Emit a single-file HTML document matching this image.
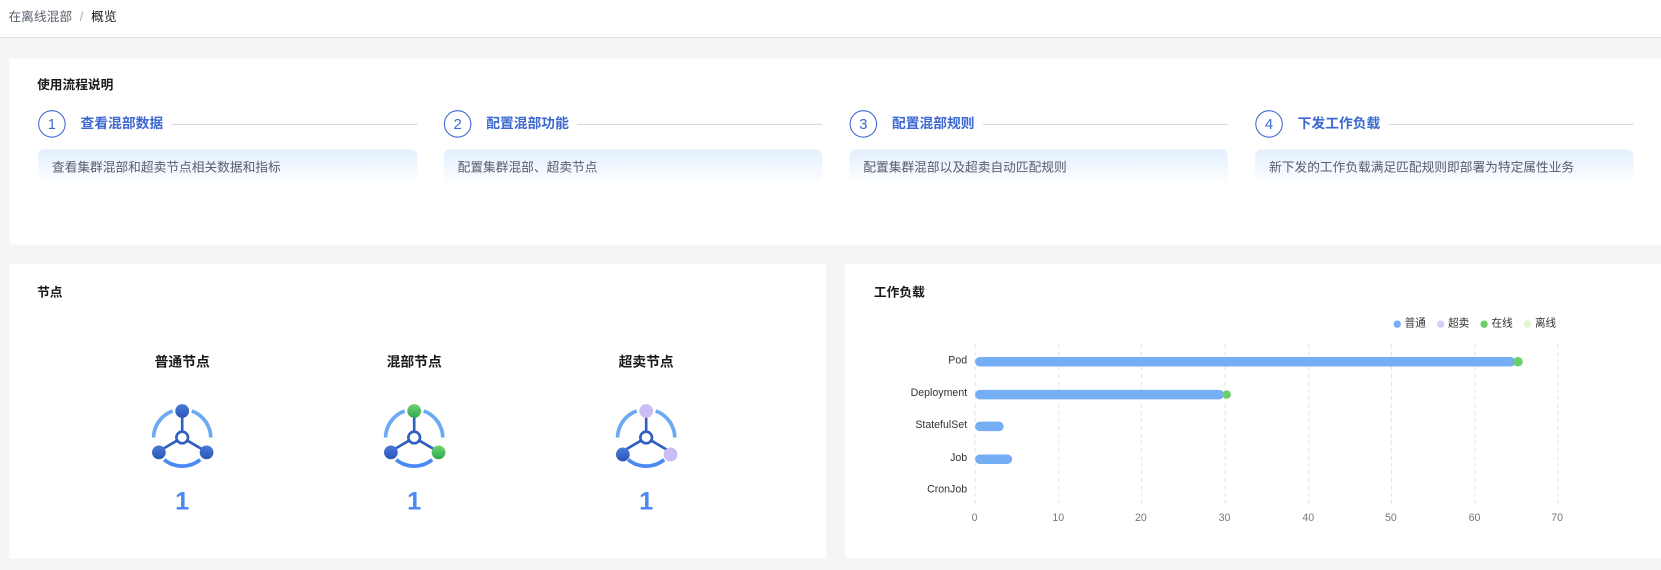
<!DOCTYPE html>
<html><head><meta charset="utf-8"><style>
*{margin:0;padding:0;box-sizing:border-box}
html,body{width:1661px;height:570px;overflow:hidden;background:#f5f5f5}
#w{position:absolute;left:0;top:0;width:1568px;height:538px;transform:scale(1.05931);transform-origin:0 0;font-family:"Liberation Sans","Noto Sans CJK SC",sans-serif;color:#252b3a}
.abs{position:absolute}
.hdr{left:0;top:0;width:1568px;height:36px;background:#fff;border-bottom:1px solid #dfe1e6}
.card{background:#fff}
.t{font-size:12px;font-weight:bold;color:#191919;line-height:16px}
.step .c{position:absolute;left:0;top:0;width:26px;height:26px;border:1px solid #3d68d1;border-radius:50%;color:#3d68d1;font-size:14px;text-align:center;line-height:24px;background:#fff}
.step .n{position:absolute;left:27px;top:5px;font-size:13px;line-height:16px;font-weight:bold;color:#3d68d1;background:#fff;padding:0 8px 0 13px}
.step .l{position:absolute;left:0;top:13px;height:1px;background:#d9d9d9}
.step .b{position:absolute;left:0;top:37px;height:34px;border-radius:6px;background:linear-gradient(#e2effd,#fff);font-size:12px;color:#575d6c;padding:0 13px;line-height:34px}
.nt{font-size:13px;font-weight:bold;color:#191919;width:120px;text-align:center;line-height:16px}
.num{font-size:24px;font-weight:bold;color:#4a8af4;width:60px;text-align:center;line-height:28px}
.yl{font-size:10px;color:#333;width:100px;text-align:right;line-height:12px}
.xl{font-size:10px;color:#777;width:30px;text-align:center;line-height:12px}
.lg{font-size:10px;color:#333;line-height:12px}
</style></head><body><div id="w">
<div class="abs hdr"></div>
<div class="abs" style="left:8px;top:9px;font-size:12px;line-height:14px;color:#575d6c">在离线混部 <span style="color:#aaa;margin:0 4px">/</span> <span style="color:#191919">概览</span></div>

<div class="abs card" style="left:9px;top:55px;width:1559px;height:176px"></div>
<div class="abs t" style="left:35px;top:72px">使用流程说明</div>

<div class="abs step" style="left:36px;top:104px;width:358px;height:70px"><div class="l" style="width:358px"></div><div class="c">1</div><div class="n">查看混部数据</div><div class="b" style="width:358px">查看集群混部和超卖节点相关数据和指标</div></div>
<div class="abs step" style="left:419px;top:104px;width:357px;height:70px"><div class="l" style="width:357px"></div><div class="c">2</div><div class="n">配置混部功能</div><div class="b" style="width:357px">配置集群混部、超卖节点</div></div>
<div class="abs step" style="left:802px;top:104px;width:357px;height:70px"><div class="l" style="width:357px"></div><div class="c">3</div><div class="n">配置混部规则</div><div class="b" style="width:357px">配置集群混部以及超卖自动匹配规则</div></div>
<div class="abs step" style="left:1185px;top:104px;width:357px;height:70px"><div class="l" style="width:357px"></div><div class="c">4</div><div class="n">下发工作负载</div><div class="b" style="width:357px">新下发的工作负载满足匹配规则即部署为特定属性业务</div></div>

<div class="abs card" style="left:9px;top:249px;width:771px;height:278px"></div>
<div class="abs card" style="left:798px;top:249px;width:770px;height:278px"></div>
<div class="abs t" style="left:35px;top:268px">节点</div>
<div class="abs t" style="left:825px;top:268px">工作负载</div>

<div class="abs nt" style="left:112px;top:334px">普通节点</div>
<div class="abs nt" style="left:331px;top:334px">混部节点</div>
<div class="abs nt" style="left:550px;top:334px">超卖节点</div>

<svg class="abs" style="left:0;top:0" width="1568" height="538">
<defs>
<linearGradient id="bl" x1="0" y1="0" x2="0" y2="1"><stop offset="0" stop-color="#4a7ad8"/><stop offset="1" stop-color="#2a56b8"/></linearGradient>
<linearGradient id="gr" x1="0" y1="0" x2="0" y2="1"><stop offset="0" stop-color="#6ed36e"/><stop offset="1" stop-color="#2fa84f"/></linearGradient>
</defs>
<g transform="translate(172,413)">
<path d="M-9,-25 A27,27 0 0 0 -27,0" stroke="#6aaaf5" stroke-width="3.5" fill="none"/>
<path d="M9,-25 A27,27 0 0 1 27,0" stroke="#6aaaf5" stroke-width="3.5" fill="none"/>
<path d="M-17,21 A27,27 0 0 0 17,21" stroke="#4a8af4" stroke-width="3.5" fill="none"/>
<line x1="0" y1="-25" x2="0" y2="-6" stroke="#2f5fc0" stroke-width="2.5"/>
<line x1="-5" y1="3" x2="-22" y2="13" stroke="#2f5fc0" stroke-width="2.5"/>
<line x1="5" y1="3" x2="22" y2="13" stroke="#2f5fc0" stroke-width="2.5"/>
<circle cx="0" cy="0" r="5.5" fill="#fff" stroke="#2f5fc0" stroke-width="2.5"/>
<circle cx="0" cy="-25" r="6.5" fill="url(#bl)"/>
<circle cx="-22" cy="14" r="6.5" fill="url(#bl)"/>
<circle cx="23" cy="14" r="6.5" fill="url(#bl)"/>
</g>
<g transform="translate(391,413)">
<path d="M-9,-25 A27,27 0 0 0 -27,0" stroke="#6aaaf5" stroke-width="3.5" fill="none"/>
<path d="M9,-25 A27,27 0 0 1 27,0" stroke="#6aaaf5" stroke-width="3.5" fill="none"/>
<path d="M-17,21 A27,27 0 0 0 17,21" stroke="#4a8af4" stroke-width="3.5" fill="none"/>
<line x1="0" y1="-25" x2="0" y2="-6" stroke="#2f5fc0" stroke-width="2.5"/>
<line x1="-5" y1="3" x2="-22" y2="13" stroke="#2f5fc0" stroke-width="2.5"/>
<line x1="5" y1="3" x2="22" y2="13" stroke="#2f5fc0" stroke-width="2.5"/>
<circle cx="0" cy="0" r="5.5" fill="#fff" stroke="#2f5fc0" stroke-width="2.5"/>
<circle cx="0" cy="-25" r="6.5" fill="url(#gr)"/>
<circle cx="-22" cy="14" r="6.5" fill="url(#bl)"/>
<circle cx="23" cy="14" r="6.5" fill="url(#gr)"/>
</g>
<g transform="translate(610,413)">
<path d="M-9,-25 A27,27 0 0 0 -27,0" stroke="#6aaaf5" stroke-width="3.5" fill="none"/>
<path d="M9,-25 A27,27 0 0 1 27,0" stroke="#6aaaf5" stroke-width="3.5" fill="none"/>
<path d="M-17,21 A27,27 0 0 0 17,21" stroke="#4a8af4" stroke-width="3.5" fill="none"/>
<line x1="0" y1="-25" x2="0" y2="-6" stroke="#2f5fc0" stroke-width="2.5"/>
<line x1="-5" y1="3" x2="-22" y2="13" stroke="#2f5fc0" stroke-width="2.5"/>
<line x1="5" y1="3" x2="22" y2="13" stroke="#2f5fc0" stroke-width="2.5"/>
<circle cx="0" cy="0" r="5.5" fill="#fff" stroke="#2f5fc0" stroke-width="2.5"/>
<circle cx="0" cy="-25" r="6.5" fill="#cbbcf6"/>
<circle cx="-22" cy="16" r="6.5" fill="url(#bl)"/>
<circle cx="23" cy="16" r="6.5" fill="#cbbcf6"/>
</g>

<g stroke="#e3e5ea" stroke-dasharray="4,3" stroke-width="1">
<line x1="920.5" y1="325" x2="920.5" y2="478"/>
<line x1="999.5" y1="325" x2="999.5" y2="478"/>
<line x1="1077.5" y1="325" x2="1077.5" y2="478"/>
<line x1="1156.5" y1="325" x2="1156.5" y2="478"/>
<line x1="1235.5" y1="325" x2="1235.5" y2="478"/>
<line x1="1313.5" y1="325" x2="1313.5" y2="478"/>
<line x1="1392.5" y1="325" x2="1392.5" y2="478"/>
<line x1="1470.5" y1="325" x2="1470.5" y2="478"/>
</g>
<g stroke-linecap="round" stroke-width="9">
<line x1="925" y1="341.5" x2="1426" y2="341.5" stroke="#76aef6"/>
<line x1="925" y1="372.5" x2="1151" y2="372.5" stroke="#76aef6"/>
<line x1="925" y1="402.5" x2="943" y2="402.5" stroke="#76aef6"/>
<line x1="925" y1="433.5" x2="951" y2="433.5" stroke="#76aef6"/>
</g>
<circle cx="1433" cy="341.5" r="4.5" fill="#6acf6a"/>
<circle cx="1158" cy="372.5" r="4" fill="#6acf6a"/>
<circle cx="1319" cy="306" r="3.5" fill="#76aef6"/>
<circle cx="1360" cy="306" r="3.5" fill="#d5cdfc"/>
<circle cx="1401" cy="306" r="3.5" fill="#6acf6a"/>
<circle cx="1442" cy="306" r="3.5" fill="#e0f5d2"/>
</svg>

<div class="abs lg" style="left:1326px;top:300px">普通</div>
<div class="abs lg" style="left:1367px;top:300px">超卖</div>
<div class="abs lg" style="left:1408px;top:300px">在线</div>
<div class="abs lg" style="left:1449px;top:300px">离线</div>

<div class="abs yl" style="left:813px;top:335px">Pod</div>
<div class="abs yl" style="left:813px;top:366px">Deployment</div>
<div class="abs yl" style="left:813px;top:396px">StatefulSet</div>
<div class="abs yl" style="left:813px;top:427px">Job</div>
<div class="abs yl" style="left:813px;top:457px">CronJob</div>

<div class="abs xl" style="left:905px;top:484px">0</div>
<div class="abs xl" style="left:984px;top:484px">10</div>
<div class="abs xl" style="left:1062px;top:484px">20</div>
<div class="abs xl" style="left:1141px;top:484px">30</div>
<div class="abs xl" style="left:1220px;top:484px">40</div>
<div class="abs xl" style="left:1298px;top:484px">50</div>
<div class="abs xl" style="left:1377px;top:484px">60</div>
<div class="abs xl" style="left:1455px;top:484px">70</div>

<div class="abs num" style="left:142px;top:460px">1</div>
<div class="abs num" style="left:361px;top:460px">1</div>
<div class="abs num" style="left:580px;top:460px">1</div>
</div></body></html>
